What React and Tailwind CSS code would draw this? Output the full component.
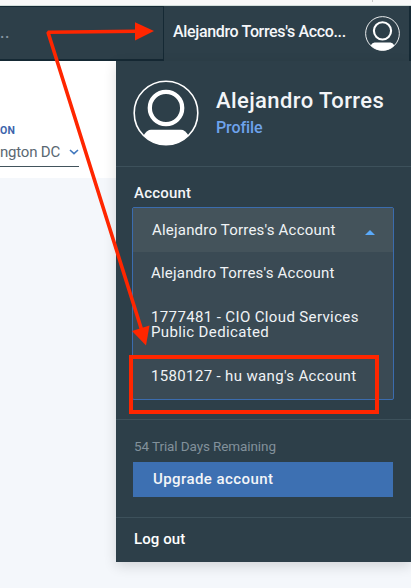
function Avatar({ className, ring, head }) {
  return (
    <svg viewBox="0 0 66 66" className={className} fill="none" stroke="#fff">
      <circle cx="33" cy="33" r="31.8" strokeWidth={ring} />
      <circle cx="33" cy="28" r="16.2" strokeWidth={head} />
      <path
        d="M10.500 55.500Q14 49.800 18 49.800H48Q52 49.800 55.500 55.500Q46 65 33 65Q20.500 65 10.500 55.500Z"
        fill="#fff"
        stroke="none"
      />
    </svg>
  );
}

function Header() {
  return (
    <header className="flex h-[55px] bg-[#2d3f49] text-base leading-5">
      <div className="h-full w-[164px] border-t border-r border-b-2 border-[#152934] pt-[16px] font-medium tracking-[0.5px] text-[#8897a2]">
        ..
      </div>
      <div className="flex h-full w-[245px] items-start pl-[9px]">
        <span className="mt-[16px] w-[192px] whitespace-nowrap font-medium tracking-[-0.34px] text-[#f5f7fa]">
          Alejandro Torres's Acco...
        </span>
        <Avatar className="mt-[10px] h-[35px] w-[35px] shrink-0" ring={1.7} head={4} />
      </div>
      <div className="h-full w-0.5 bg-[#152934]" />
    </header>
  );
}

function Region() {
  return (
    <aside className="w-[116px] shrink-0">
      <div className="h-[117px] bg-white pt-[63px]">
        <div className="text-[10.5px] font-bold leading-[14px] tracking-[0.2px] text-[#3d64ac]">ON</div>
        <div className="mt-[4px] flex h-[25px] w-[79px] items-center border-b border-[#42535c] pb-[4px] text-[15px] leading-5 text-[#5a6872]">
          <span className="w-[69px] whitespace-nowrap tracking-[-0.2px]">ngton DC</span>
          <svg className="h-[6px] w-[10px]" viewBox="0 0 10 6" fill="none" stroke="#4178be" strokeWidth="1.6">
            <path d="M1 1L5 4.600L9 1" />
          </svg>
        </div>
      </div>
    </aside>
  );
}

function AccountSelect() {
  return (
    <div className="ml-[16px] mt-[4px] h-[193px] w-[262px] rounded-[2px] border border-[#3b6cae] bg-[#3a4a54] text-[15px] text-[#f0f3f6]">
      <div className="flex h-[44px] items-center bg-[#44535b] pl-[19px] pr-[18px]">
        <span className="flex-1 whitespace-nowrap tracking-[0.2px]">Alejandro Torres's Account</span>
        <svg className="mt-[4px] h-[5px] w-[10px]" viewBox="0 0 10 5">
          <path d="M0 5L5 0L10 5Z" fill="#5aaafa" />
        </svg>
      </div>
      <div className="pl-[18px] pt-[11px] leading-5 tracking-[0.2px]">Alejandro Torres's Account</div>
      <div className="mt-[27px] pl-[18px] leading-[15px] tracking-[0.37px]">
        1777481 - CIO Cloud Services
        <br />
        Public Dedicated
      </div>
      <div className="mt-[26px] pl-[18px] leading-5 tracking-[0.35px]">1580127 - hu wang's Account</div>
    </div>
  );
}

function AccountPanel() {
  return (
    <section className="h-[501px] w-[295px] bg-[#2d3f49] text-base leading-5 text-[#f3f5f8] shadow-[0_4px_12px_rgba(0,0,0,0.14)]">
      <div className="flex h-[106px] border-b border-[#3d515b] pl-[17px] pt-[19px]">
        <Avatar className="h-[66px] w-[66px] shrink-0" ring={1.6} head={4.3} />
        <div className="ml-[17px] pt-[7px]">
          <div className="whitespace-nowrap text-[22px] font-medium leading-[28px] tracking-[0.4px]">Alejandro Torres</div>
          <div className="mt-[3px] font-medium tracking-[-0.1px] text-[#6ea3ec]">Profile</div>
        </div>
      </div>
      <div className="h-[253px] border-b border-[#3d515b] pt-[16px]">
        <div className="pl-[18px] text-[15px] leading-5 font-medium tracking-[0.2px]">Account</div>
        <AccountSelect />
      </div>
      <div className="h-[98px] border-b border-[#3d515b] pt-[16px]">
        <div className="pl-[18px] text-[13.5px] leading-5 tracking-[-0.1px] text-[#82919b]">54 Trial Days Remaining</div>
        <div className="ml-[17px] mt-[6px] h-[35px] w-[260px] bg-[#3d70b2] pl-[20px] pt-[7px] text-[15px] leading-5 font-medium tracking-[0.42px]">
          Upgrade account
        </div>
      </div>
      <div className="pl-[18px] pt-[11px] text-[15px] leading-5 font-medium tracking-[0.1px] text-white">Log out</div>
    </section>
  );
}

function Annotations() {
  return (
    <svg className="pointer-events-none absolute left-0 top-0 h-[588px] w-[411px]" viewBox="0 0 411 588" fill="none" stroke="#ff2600">
      <path d="M136 31.300L48 32.200L142 331" strokeWidth="3.6" strokeLinejoin="bevel" />
      <path d="M135 22.300L154 31L135 40.500Z" fill="#ff2600" stroke="none" />
      <path d="M132 331L149.500 325.500L146 345.500Z" fill="#ff2600" stroke="none" />
      <rect x="131" y="357" width="246" height="55" strokeWidth="4" />
    </svg>
  );
}

export default function App() {
  return (
    <main className="relative h-[588px] w-[411px] overflow-hidden bg-[#f4f7fb] font-['Roboto','Noto_Sans',sans-serif]">
      <div className="flex h-[6px] justify-end border-b border-[#d3dedb] bg-[#f8f8f8] pr-[38px]">
        <div className="h-[2px] w-px bg-[#c8c8c8]" />
      </div>
      <Header />
      <div className="flex">
        <Region />
        <AccountPanel />
      </div>
      <Annotations />
    </main>
  );
}
